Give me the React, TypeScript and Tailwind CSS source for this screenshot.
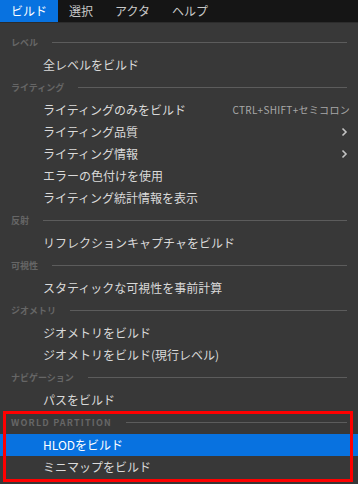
import React from "react"

type Row =
  | { kind: "header"; label: string; latin?: boolean }
  | { kind: "item"; label: string; shortcut?: string; submenu?: boolean; active?: boolean }

const rows: Row[] = [
  { kind: "header", label: "レベル" },
  { kind: "item", label: "全レベルをビルド" },
  { kind: "header", label: "ライティング" },
  { kind: "item", label: "ライティングのみをビルド", shortcut: "CTRL+SHIFT+セミコロン" },
  { kind: "item", label: "ライティング品質", submenu: true },
  { kind: "item", label: "ライティング情報", submenu: true },
  { kind: "item", label: "エラーの色付けを使用" },
  { kind: "item", label: "ライティング統計情報を表示" },
  { kind: "header", label: "反射" },
  { kind: "item", label: "リフレクションキャプチャをビルド" },
  { kind: "header", label: "可視性" },
  { kind: "item", label: "スタティックな可視性を事前計算" },
  { kind: "header", label: "ジオメトリ" },
  { kind: "item", label: "ジオメトリをビルド" },
  { kind: "item", label: "ジオメトリをビルド(現行レベル)" },
  { kind: "header", label: "ナビゲーション" },
  { kind: "item", label: "パスをビルド" },
  { kind: "header", label: "WORLD PARTITION", latin: true },
  { kind: "item", label: "HLODをビルド", active: true },
  { kind: "item", label: "ミニマップをビルド" },
]

const tabs = ["ビルド", "選択", "アクタ", "ヘルプ"]

function Chevron() {
  return (
    <svg width="7" height="10" viewBox="0 0 7 10" fill="none">
      <path d="M1.5 1.5 L5 5 L1.5 8.5" stroke="#c4c4c4" strokeWidth="1.6" />
    </svg>
  )
}

export default function App() {
  return (
    <div
      className="w-[358px] h-[484px] overflow-hidden bg-[#383838] text-[12px]"
      style={{ fontFamily: '"Noto Sans CJK JP", "Noto Sans", sans-serif' }}
    >
      {/* Menu bar */}
      <div className="flex h-[23px] bg-[#151515] border-b border-[#2c2c2c]">
        {tabs.map((t, i) => (
          <div
            key={t}
            className={`flex items-center px-[11px] leading-none text-[12px] ${
              i === 0 ? "bg-[#0872e0] text-white" : "text-[#c8c8c8]"
            }`}
          >
            {t}
          </div>
        ))}
      </div>

      {/* Dropdown */}
      <div className="relative pt-[8px]">
        {rows.map((r, i) =>
          r.kind === "header" ? (
            <div key={i} className="flex h-[23px] items-center pl-[11px] pr-[11px]">
              <span
                className={`text-[9px] font-bold leading-none text-[#666666] ${
                  r.latin ? "tracking-[1.2px]" : ""
                }`}
              >
                {r.label}
              </span>
              <div className="ml-[14px] h-px flex-1 bg-[#5c5c5c]" />
            </div>
          ) : (
            <div
              key={i}
              className={`flex h-[22px] items-center pl-[43px] pr-[9px] leading-none ${
                r.active ? "bg-[#0872e0] text-white" : "text-[#dadada]"
              }`}
            >
              <span className="flex-1">{r.label}</span>
              {r.shortcut && (
                <span className="text-[10px] tracking-[0.3px] text-[#a8a8a8] -mr-[1px]">
                  {r.shortcut}
                </span>
              )}
              {r.submenu && (
                <span className="mr-[1px]">
                  <Chevron />
                </span>
              )}
            </div>
          )
        )}

        {/* Red annotation box */}
        <div className="absolute left-[3px] top-[388px] w-[350px] h-[71px] border-[3px] border-[#ff0000]" />
      </div>
    </div>
  )
}
